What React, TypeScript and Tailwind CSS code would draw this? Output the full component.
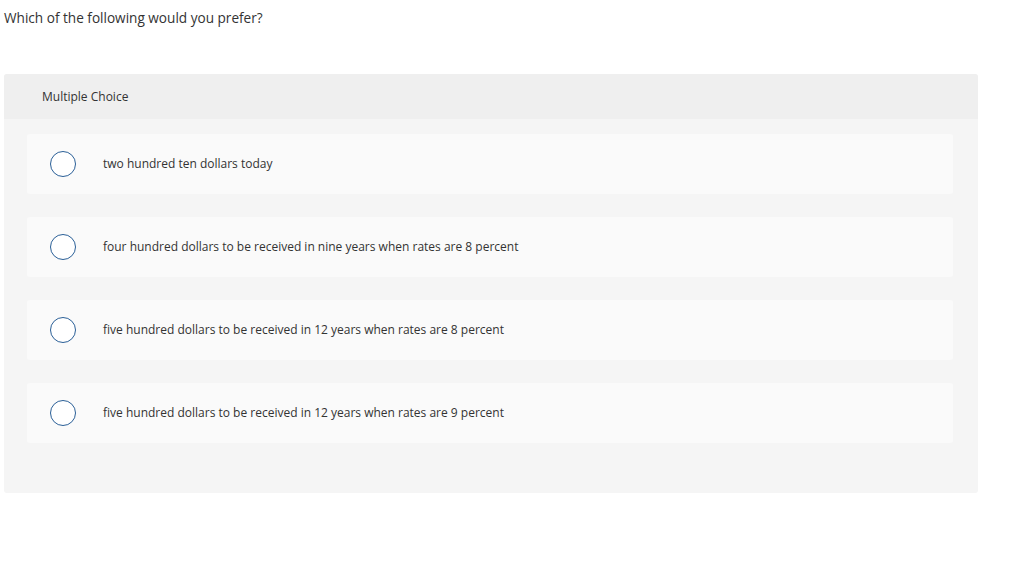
const options = [
  "two hundred ten dollars today",
  "four hundred dollars to be received in nine years when rates are 8 percent",
  "five hundred dollars to be received in 12 years when rates are 8 percent",
  "five hundred dollars to be received in 12 years when rates are 9 percent",
];

export default function App() {
  return (
    <div className="w-[1024px] h-[570px] bg-white text-[#333] font-['Open_Sans','Liberation_Sans',sans-serif]">
      <p className="pl-[4px] pt-[9px] text-[13.6px] leading-[17px]">Which of the following would you prefer?</p>
      <div className="ml-[4px] mt-[48px] w-[974px] h-[419px] rounded-[3px] bg-[#f5f5f5]">
        <div className="h-[45px] flex items-center pl-[38px] bg-[#efefef] rounded-t-[3px] text-[12px]">
          Multiple Choice
        </div>
        <div className="pl-[23px] pt-[15px] flex flex-col gap-[23px]">
          {options.map((opt) => (
            <div key={opt} className="w-[926px] h-[60px] rounded-[3px] bg-[#fafafa] flex items-center">
              <span className="ml-[23px] w-[26px] h-[26px] rounded-full border-[1.5px] border-[#2a5f97] bg-white shrink-0" />
              <span className="ml-[27px] text-[12px]">{opt}</span>
            </div>
          ))}
        </div>
      </div>
    </div>
  );
}
